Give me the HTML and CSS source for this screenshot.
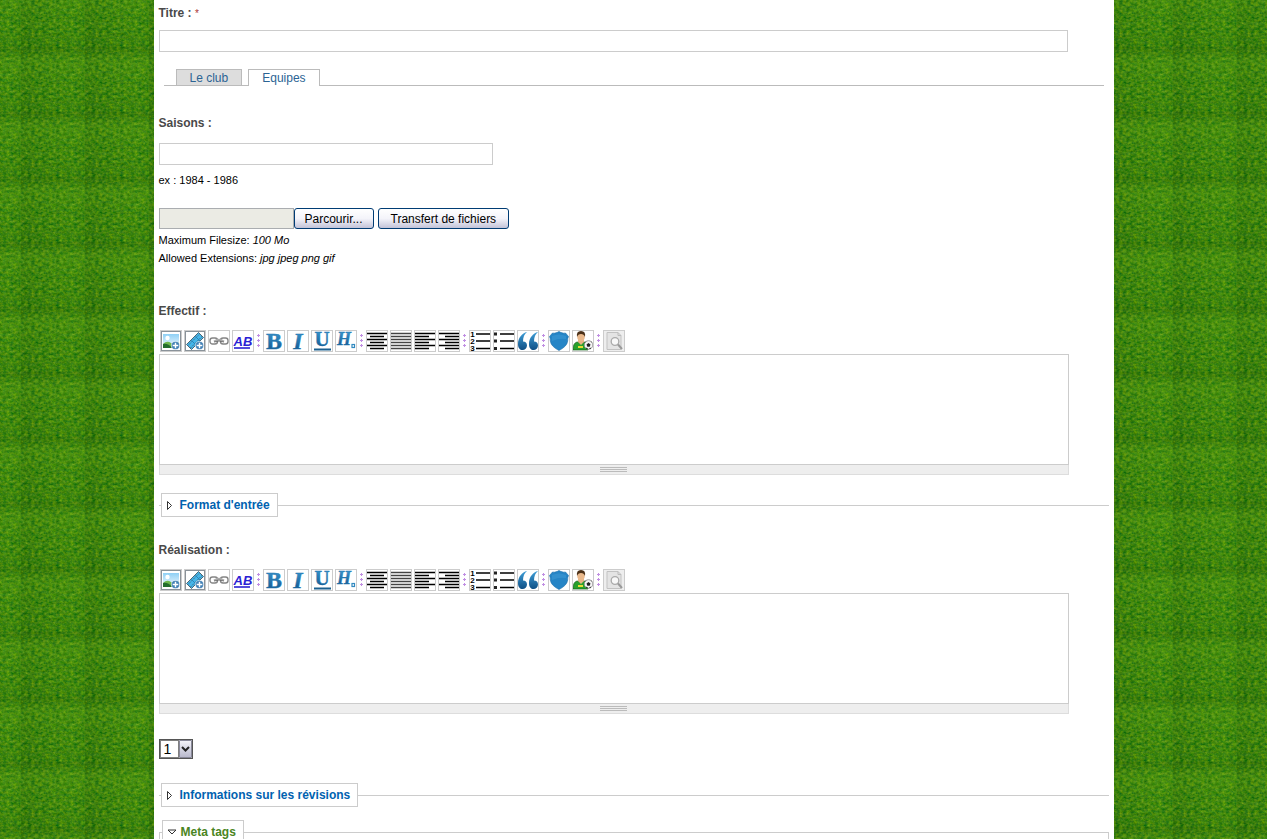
FILE: index.html
```html
<!DOCTYPE html>
<html lang="fr">
<head>
<meta charset="utf-8">
<title>Equipes</title>
<link rel="stylesheet" href="styles.css">
</head>
<body>
<svg class="sprite" aria-hidden="true">
  <defs>
    <linearGradient id="blue" x1="0" y1="0" x2="0" y2="1">
      <stop offset="0" stop-color="#3f9fd8"/><stop offset="1" stop-color="#0f4f85"/>
    </linearGradient>
    <linearGradient id="sky" x1="0" y1="0" x2="0" y2="1">
      <stop offset="0" stop-color="#8fd0f5"/><stop offset="1" stop-color="#f4fbff"/>
    </linearGradient>
    <symbol id="plus" viewBox="0 0 8 8">
      <circle cx="4" cy="4" r="3.6" fill="#3f7fb5" stroke="#fff" stroke-width=".5"/>
      <path d="M4 1.500v5M1.500 4h5" stroke="#fff" stroke-width="1.300"/>
    </symbol>
    <symbol id="i-image" viewBox="0 0 20 20">
      <rect x=".5" y=".5" width="19" height="19" fill="#fff" stroke="#8a9299"/>
      <rect x="2" y="3" width="16" height="14" fill="url(#sky)"/>
      <circle cx="6.500" cy="7" r="2.200" fill="#fff"/>
      <path d="M2 13q4-4 8-1t8-1v6H2z" fill="#6fb84e"/>
      <path d="M2 13q5-1 9 4H2z" fill="#236d2e"/>
      <use href="#plus" x="10" y="10" width="9" height="9"/>
    </symbol>
    <symbol id="i-film" viewBox="0 0 20 20">
      <rect x=".5" y=".5" width="19" height="19" fill="#fff" stroke="#8a9299"/>
      <path d="M1.500 13.500 13.500 1.500l5 5L6.500 18.500z" fill="#45b6ea" stroke="#4d6674"/>
      <path d="m3 14.500 11.500-11.500M5.500 17 17 5.500" stroke="#3e6a82" stroke-dasharray="1.500 1"/>
      <path d="m6.500 9.500 4.500 4.500m-.5-8.500 4.500 4.500" stroke="#2b86b8"/>
      <use href="#plus" x="10" y="10" width="9" height="9"/>
    </symbol>
    <symbol id="i-link" viewBox="0 0 20 20">
      <g fill="none" stroke="#858585" stroke-width="1.400">
        <rect x="1" y="7" width="7.500" height="6" rx="2.500"/>
        <rect x="11.500" y="7" width="7.500" height="6" rx="2.500"/>
        <path d="M5 10.500q5-3.500 10 0" stroke="#aaa" stroke-width="2"/>
        <path d="M5 11q5-2 10 0" stroke="#666" stroke-width=".8"/>
      </g>
    </symbol>
    <symbol id="i-ab" viewBox="0 0 20 20">
      <text x="10" y="15" class="g-ab">AB</text>
      <path d="M1 17h16" stroke="#2a20d4" stroke-width="1.600"/>
    </symbol>
    <symbol id="i-bold" viewBox="0 0 20 20"><text x="10" y="18" class="g-serif g-big">B</text></symbol>
    <symbol id="i-italic" viewBox="0 0 20 20"><text x="10" y="18" class="g-serif g-big g-it">I</text></symbol>
    <symbol id="i-under" viewBox="0 0 20 20">
      <text x="10" y="15" class="g-serif g-mid">U</text>
      <path d="M2 18.500h17" stroke="#1c608f" stroke-width="2"/>
    </symbol>
    <symbol id="i-head" viewBox="0 0 20 20">
      <text x="8" y="14" class="g-serif g-head">H</text>
      <rect x="16" y="13.500" width="2.500" height="3" fill="none" stroke="#3189bf" stroke-width="1.200"/>
    </symbol>
    <symbol id="i-center" viewBox="0 0 20 20"><path d="M0 2.500h20M3 5.500h14M0 8.500h20M3 11.500h14M0 14.500h20M3 17.500h14" class="g-line"/></symbol>
    <symbol id="i-justify" viewBox="0 0 20 20"><path d="M0 2.500h20M0 5.500h20M0 8.500h20M0 11.500h20M0 14.500h20M0 17.500h20" class="g-line g-soft"/></symbol>
    <symbol id="i-left" viewBox="0 0 20 20"><path d="M0 2.500h20M0 5.500h14M0 8.500h20M0 11.500h14M0 14.500h20M0 17.500h14" class="g-line"/></symbol>
    <symbol id="i-right" viewBox="0 0 20 20"><path d="M0 2.500h20M6 5.500h14M0 8.500h20M6 11.500h14M0 14.500h20M6 17.500h14" class="g-line"/></symbol>
    <symbol id="i-ol" viewBox="0 0 20 20">
      <path d="M6 3h14M6 10h14M6 17.500h14" class="g-line"/>
      <text x="2.500" y="6" class="g-num">1</text><text x="2.500" y="13" class="g-num">2</text><text x="2.500" y="20" class="g-num">3</text>
    </symbol>
    <symbol id="i-ul" viewBox="0 0 20 20">
      <path d="M6 3h14M6 10h14M6 17.500h14" class="g-line"/>
      <path d="M0 1.500h3v3H0zM0 8.500h3v3H0zM0 16h3v3H0z" fill="#222"/>
    </symbol>
    <symbol id="i-quote" viewBox="0 0 20 20">
      <path d="M9 1C4 2 0 7 0 13c0 4 2 6 4.500 6S9 17 9 14.500 7.500 10.500 5 10.500C5 6 6.500 3 9 1zM20 1c-5 1-9 6-9 12 0 4 2 6 4.500 6s4.500-2 4.500-4.500-1.500-4-4-4C16 6 17.500 3 20 1z" fill="url(#blue)"/>
    </symbol>
    <symbol id="i-shield" viewBox="0 0 20 20">
      <path d="M3.500 2q2 .5 3.500-.2Q8.500 1.500 10 .5q1.500 1 3 1.300 1.500.7 3.500.2l3 3.500q-1 2-.8 4.500-.7 5.500-8.700 9.500-8-4-8.700-9.500Q1.500 7.500.5 5.500z" fill="#2685c6" stroke="#1d6da8" stroke-width=".6"/>
      <path d="M3 5q7-3 14 0v3Q10 7 3 10z" fill="#4ca5dc" opacity=".35"/>
    </symbol>
    <symbol id="i-player" viewBox="0 0 20 20">
      <path d="M0 19q0-7 4-8l4 1 4-1q3 1 3 8z" fill="#27a02c" stroke="#145e1b" stroke-width=".7"/>
      <path d="m5 11 3 3 3-3v-2H5z" fill="#e9b384"/>
      <ellipse cx="8" cy="6" rx="3.800" ry="4.500" fill="#eab98c"/>
      <path d="M4 6Q3 0 8 0t4 6q-1-3-4-3T4 6z" fill="#4b3018"/>
      <path d="M5 16h5" stroke="#e6dd38" stroke-width="2"/>
      <circle cx="15.500" cy="14" r="4.300" fill="#f4f4f4" stroke="#666" stroke-width=".6"/>
      <path d="m15.500 12 2 1.500-.8 2.200h-2.400l-.8-2.200zM11.500 12l2-1.500-.5-.3zM19.500 12l-2-1.800 1 .2zM13 18l.7-1.500 1.300 1.600zM18 18l-.8-1.500-1 1.600z" fill="#222"/>
    </symbol>
    <symbol id="i-preview" viewBox="0 0 20 20">
      <path d="M0 0h20v20H0z" fill="#eee"/>
      <path d="M3 1.500h11l3 3v14H3z" fill="#e4e4e4" stroke="#c2c2c2"/>
      <path d="M14 1.500v3h3" fill="none" stroke="#bbb"/>
      <circle cx="11" cy="10.500" r="3.800" fill="#f8f8f8" stroke="#aaa" stroke-width="1.300"/>
      <path d="m14 13.500 4 4.500" stroke="#999" stroke-width="2"/>
    </symbol>
    <symbol id="i-sep" viewBox="0 0 5 22">
      <path d="M2.500 4v3M1 5.500h3M2.500 9v3M1 10.500h3M2.500 14v3M1 15.500h3" stroke="#c08ee2"/>
    </symbol>
  </defs>
</svg>
<main class="page">
  <form class="node-form">
    <label class="field-label title-label" for="title">Titre : <span class="required">*</span></label>
    <input class="text-box text-wide" id="title" type="text">

    <ul class="tabs">
      <li><a class="tab" href="#club">Le club</a></li>
      <li><a class="tab tab-active" href="#equipes">Equipes</a></li>
    </ul>

    <label class="field-label season-label" for="season">Saisons :</label>
    <input class="text-box text-short" id="season" type="text">
    <p class="hint season-hint">ex : 1984 - 1986</p>

    <div class="upload">
      <input class="file-name" type="text" aria-label="Fichier" readonly>
      <button class="xp-button browse" type="button">Parcourir...</button>
      <button class="xp-button send" type="button">Transfert de fichiers</button>
    </div>
    <p class="hint">Maximum Filesize: <em>100 Mo</em></p>
    <p class="hint">Allowed Extensions: <em>jpg jpeg png gif</em></p>

    <section class="editor">
      <label class="field-label" for="squad">Effectif :</label>
      <div class="toolbar">
        <button type="button" aria-label="Image"><svg><use href="#i-image"/></svg></button>
        <button type="button" aria-label="Vidéo"><svg><use href="#i-film"/></svg></button>
        <button type="button" aria-label="Lien"><svg><use href="#i-link"/></svg></button>
        <button type="button" aria-label="Abréviation"><svg><use href="#i-ab"/></svg></button>
        <svg class="sep"><use href="#i-sep"/></svg>
        <button type="button" aria-label="Gras"><svg><use href="#i-bold"/></svg></button>
        <button type="button" aria-label="Italique"><svg><use href="#i-italic"/></svg></button>
        <button type="button" aria-label="Souligné"><svg><use href="#i-under"/></svg></button>
        <button type="button" aria-label="Titre"><svg><use href="#i-head"/></svg></button>
        <svg class="sep"><use href="#i-sep"/></svg>
        <button type="button" aria-label="Centrer"><svg><use href="#i-center"/></svg></button>
        <button type="button" aria-label="Justifier"><svg><use href="#i-justify"/></svg></button>
        <button type="button" aria-label="Gauche"><svg><use href="#i-left"/></svg></button>
        <button type="button" aria-label="Droite"><svg><use href="#i-right"/></svg></button>
        <svg class="sep"><use href="#i-sep"/></svg>
        <button type="button" aria-label="Liste numérotée"><svg><use href="#i-ol"/></svg></button>
        <button type="button" aria-label="Liste"><svg><use href="#i-ul"/></svg></button>
        <button type="button" aria-label="Citation"><svg><use href="#i-quote"/></svg></button>
        <svg class="sep"><use href="#i-sep"/></svg>
        <button type="button" aria-label="Club"><svg><use href="#i-shield"/></svg></button>
        <button type="button" aria-label="Joueur"><svg><use href="#i-player"/></svg></button>
        <svg class="sep"><use href="#i-sep"/></svg>
        <button type="button" aria-label="Aperçu"><svg><use href="#i-preview"/></svg></button>
      </div>
      <textarea class="area" id="squad"></textarea>
      <div class="grippie"><span></span></div>
    </section>

    <fieldset class="collapsed">
      <legend><a href="#format"><svg class="arrow" viewBox="0 0 7 11"><path d="M1.500 1.500v8l4-4z"/></svg>Format d'entrée</a></legend>
    </fieldset>

    <section class="editor editor-second">
      <label class="field-label" for="honours">Réalisation :</label>
      <div class="toolbar">
        <button type="button" aria-label="Image"><svg><use href="#i-image"/></svg></button>
        <button type="button" aria-label="Vidéo"><svg><use href="#i-film"/></svg></button>
        <button type="button" aria-label="Lien"><svg><use href="#i-link"/></svg></button>
        <button type="button" aria-label="Abréviation"><svg><use href="#i-ab"/></svg></button>
        <svg class="sep"><use href="#i-sep"/></svg>
        <button type="button" aria-label="Gras"><svg><use href="#i-bold"/></svg></button>
        <button type="button" aria-label="Italique"><svg><use href="#i-italic"/></svg></button>
        <button type="button" aria-label="Souligné"><svg><use href="#i-under"/></svg></button>
        <button type="button" aria-label="Titre"><svg><use href="#i-head"/></svg></button>
        <svg class="sep"><use href="#i-sep"/></svg>
        <button type="button" aria-label="Centrer"><svg><use href="#i-center"/></svg></button>
        <button type="button" aria-label="Justifier"><svg><use href="#i-justify"/></svg></button>
        <button type="button" aria-label="Gauche"><svg><use href="#i-left"/></svg></button>
        <button type="button" aria-label="Droite"><svg><use href="#i-right"/></svg></button>
        <svg class="sep"><use href="#i-sep"/></svg>
        <button type="button" aria-label="Liste numérotée"><svg><use href="#i-ol"/></svg></button>
        <button type="button" aria-label="Liste"><svg><use href="#i-ul"/></svg></button>
        <button type="button" aria-label="Citation"><svg><use href="#i-quote"/></svg></button>
        <svg class="sep"><use href="#i-sep"/></svg>
        <button type="button" aria-label="Club"><svg><use href="#i-shield"/></svg></button>
        <button type="button" aria-label="Joueur"><svg><use href="#i-player"/></svg></button>
        <svg class="sep"><use href="#i-sep"/></svg>
        <button type="button" aria-label="Aperçu"><svg><use href="#i-preview"/></svg></button>
      </div>
      <textarea class="area" id="honours"></textarea>
      <div class="grippie"><span></span></div>
    </section>

    <select class="weight" aria-label="Poids"><option>1</option></select>

    <fieldset class="collapsed">
      <legend><a href="#revisions"><svg class="arrow" viewBox="0 0 7 11"><path d="M1.500 1.500v8l4-4z"/></svg>Informations sur les révisions</a></legend>
    </fieldset>
    <fieldset class="expanded">
      <legend><a href="#meta"><svg class="arrow-down" viewBox="0 0 10 6"><path d="M1 1h8L5 5z"/></svg>Meta tags</a></legend>
    </fieldset>
  </form>
</main>
</body>
</html>
```
FILE: styles.css
```css
* { box-sizing: border-box; }

body {
  margin: 0;
  font: 12px/18px "Liberation Sans", Arial, sans-serif;
  color: #000;
  background-color: #3a870c;
  background-image: url("data:image/svg+xml,%3Csvg xmlns='http://www.w3.org/2000/svg' width='64' height='65'%3E%3Cdefs%3E%3ClinearGradient id='h'%3E%3Cstop offset='0' stop-color='%23104000' stop-opacity='.15'/%3E%3Cstop offset='.5' stop-color='%23408000' stop-opacity='.06'/%3E%3Cstop offset='.8' stop-color='%2360b010' stop-opacity='.12'/%3E%3Cstop offset='1' stop-color='%23409000' stop-opacity='.06'/%3E%3C/linearGradient%3E%3ClinearGradient id='v' x2='0' y2='1'%3E%3Cstop offset='0' stop-color='%23184800' stop-opacity='.18'/%3E%3Cstop offset='.2' stop-color='%2368a818' stop-opacity='.22'/%3E%3Cstop offset='.5' stop-color='%2360a818' stop-opacity='.06'/%3E%3Cstop offset='1' stop-color='%23104800' stop-opacity='.08'/%3E%3C/linearGradient%3E%3Cfilter id='n' x='0' y='0' width='1' height='1' color-interpolation-filters='sRGB'%3E%3CfeTurbulence type='fractalNoise' baseFrequency='.28 .37' numOctaves='3' seed='4' stitchTiles='stitch'/%3E%3CfeColorMatrix values='.6 .2 0 0 -.15 .4 0 0 0 .325 0 0 .2 0 -.04 0 0 0 0 1'/%3E%3C/filter%3E%3C/defs%3E%3Crect width='64' height='65' filter='url(%23n)'/%3E%3Crect width='64' height='65' fill='url(%23h)'/%3E%3Crect width='64' height='65' fill='url(%23v)'/%3E%3C/svg%3E");
  background-position: 21px 47px;
}

.sprite { position: absolute; width: 0; height: 0; }

.page {
  max-width: 960px;
  height: 100vh;
  margin: 0 auto;
  padding: 4px 5px 0;
  overflow: hidden;
  background: #fff;
}

.node-form { display: flow-root; }

.field-label {
  display: block;
  font-weight: bold;
  color: #494949;
}
.title-label { margin-bottom: 7px; }
.season-label { margin: 28px 0 11px; }
.required { color: #a33; font-size: 10px; font-weight: normal; }

.text-box {
  display: block;
  height: 22px;
  padding: 0 4px;
  border: 1px solid #ccc;
  background: #fff;
}
.text-wide { width: 909px; max-width: 100%; }
.text-short { width: 334px; }

.tabs {
  display: flex;
  gap: 6px;
  margin: 17px 5px 0;
  padding: 0 12px;
  border-bottom: 1px solid #bbb;
  list-style: none;
}
.tab {
  display: block;
  height: 16px;
  padding: 0 13px;
  border: 1px solid #bbb;
  border-bottom: 0;
  line-height: 16px;
  color: #2b6494;
  background: #ddd;
  text-decoration: none;
}
.tab-active { height: 17px; margin-bottom: -1px; background: #fff; }

.hint { margin: 0; font-size: 11px; }
.season-hint { margin: 6px 0 19px; }

.upload { display: flex; margin-bottom: 2px; }
.file-name {
  width: 135px;
  height: 21px;
  border: 1px solid #aaadb0;
  background: #ebebe4;
}
.xp-button {
  height: 21px;
  padding: 0 10px;
  border: 1px solid #003c74;
  border-radius: 3px;
  background: linear-gradient(#fff, #f4f4fa 50%, #c3c3d8);
  font: 12px/18px "Liberation Sans", Arial, sans-serif;
  color: #000;
}
.send { margin-left: 4px; padding: 0 12px; }

.editor { margin-top: 35px; }
.editor-second { margin-top: 24px; }
.toolbar {
  display: flex;
  gap: 2px;
  margin: 10px 0 2px;
  padding-left: 1px;
}
.toolbar button {
  width: 22px;
  height: 22px;
  padding: 0;
  border: 1px solid #ccc;
  background: #fff;
}
.toolbar button svg { display: block; width: 20px; height: 20px; }
.toolbar .sep { width: 5px; height: 22px; }

.g-ab { font: italic bold 13px "Liberation Sans", sans-serif; fill: #2a20d4; text-anchor: middle; }
.g-serif { font: bold 18px "Liberation Serif", serif; fill: url(#blue); stroke: #2377b0; stroke-width: .4px; text-anchor: middle; }
.g-big { font-size: 24px; }
.g-mid { font-size: 21px; }
.g-it, .g-head { font-style: italic; }
.g-num { font: bold 8px "Liberation Sans", sans-serif; text-anchor: middle; }
.g-line { stroke: #000; stroke-width: 1.5px; }
.g-soft { stroke: #444; }

.area {
  display: block;
  width: 910px;
  max-width: 100%;
  height: 111px;
  border: 1px solid #ccc;
  resize: none;
}
.grippie {
  display: flex;
  align-items: center;
  justify-content: center;
  width: 910px;
  max-width: 100%;
  height: 10px;
  border: 1px solid #ddd;
  border-top: 0;
  background: #eee;
}
.grippie span {
  width: 27px;
  height: 5px;
  background: repeating-linear-gradient(#bbb 0 1px, #eee 1px 2px);
}

fieldset {
  margin: 18px 0 0;
  padding: 0 0 0 2px;
  border: 0 solid #ccc;
  border-top-width: 1px;
}
legend {
  padding: 2px 7px 2px 4px;
  border: 1px solid #ccc;
  background: #fff;
  font-weight: bold;
}
legend a {
  display: flex;
  align-items: center;
  color: #0062b0;
  text-decoration: none;
}
.arrow { width: 7px; height: 11px; margin-right: 7px; }
.arrow-down { width: 10px; height: 6px; margin-right: 4px; }
.arrow path, .arrow-down path { fill: #fff; stroke: #333; }

.expanded {
  min-height: 60px;
  margin-top: 13px;
  border-width: 1px;
}
.expanded legend a { color: #4a8522; }

.weight {
  display: block;
  width: 34px;
  height: 20px;
  margin: 25px 0 24px;
  padding: 0 4px;
  appearance: none;
  border: 1px solid #555;
  border-radius: 0;
  background: #fff url("data:image/svg+xml,%3Csvg xmlns='http://www.w3.org/2000/svg' width='32' height='18'%3E%3ClinearGradient id='g' x2='0' y2='1'%3E%3Cstop stop-color='%23f4f4fa'/%3E%3Cstop offset='1' stop-color='%23b8b8cc'/%3E%3C/linearGradient%3E%3Cpath d='M.5.5h18v17H.5z' fill='none' stroke='%23000' stroke-dasharray='1 1'/%3E%3Cpath d='M19.500.5h12v17h-12z' fill='url(%23g)' stroke='%23889'/%3E%3Cpath d='M22 7l3.500 3.500L29 7' fill='none' stroke='%23222' stroke-width='2'/%3E%3C/svg%3E") no-repeat right top;
  font: 14px/16px "Liberation Sans", Arial, sans-serif;
  color: #000;
}
```
